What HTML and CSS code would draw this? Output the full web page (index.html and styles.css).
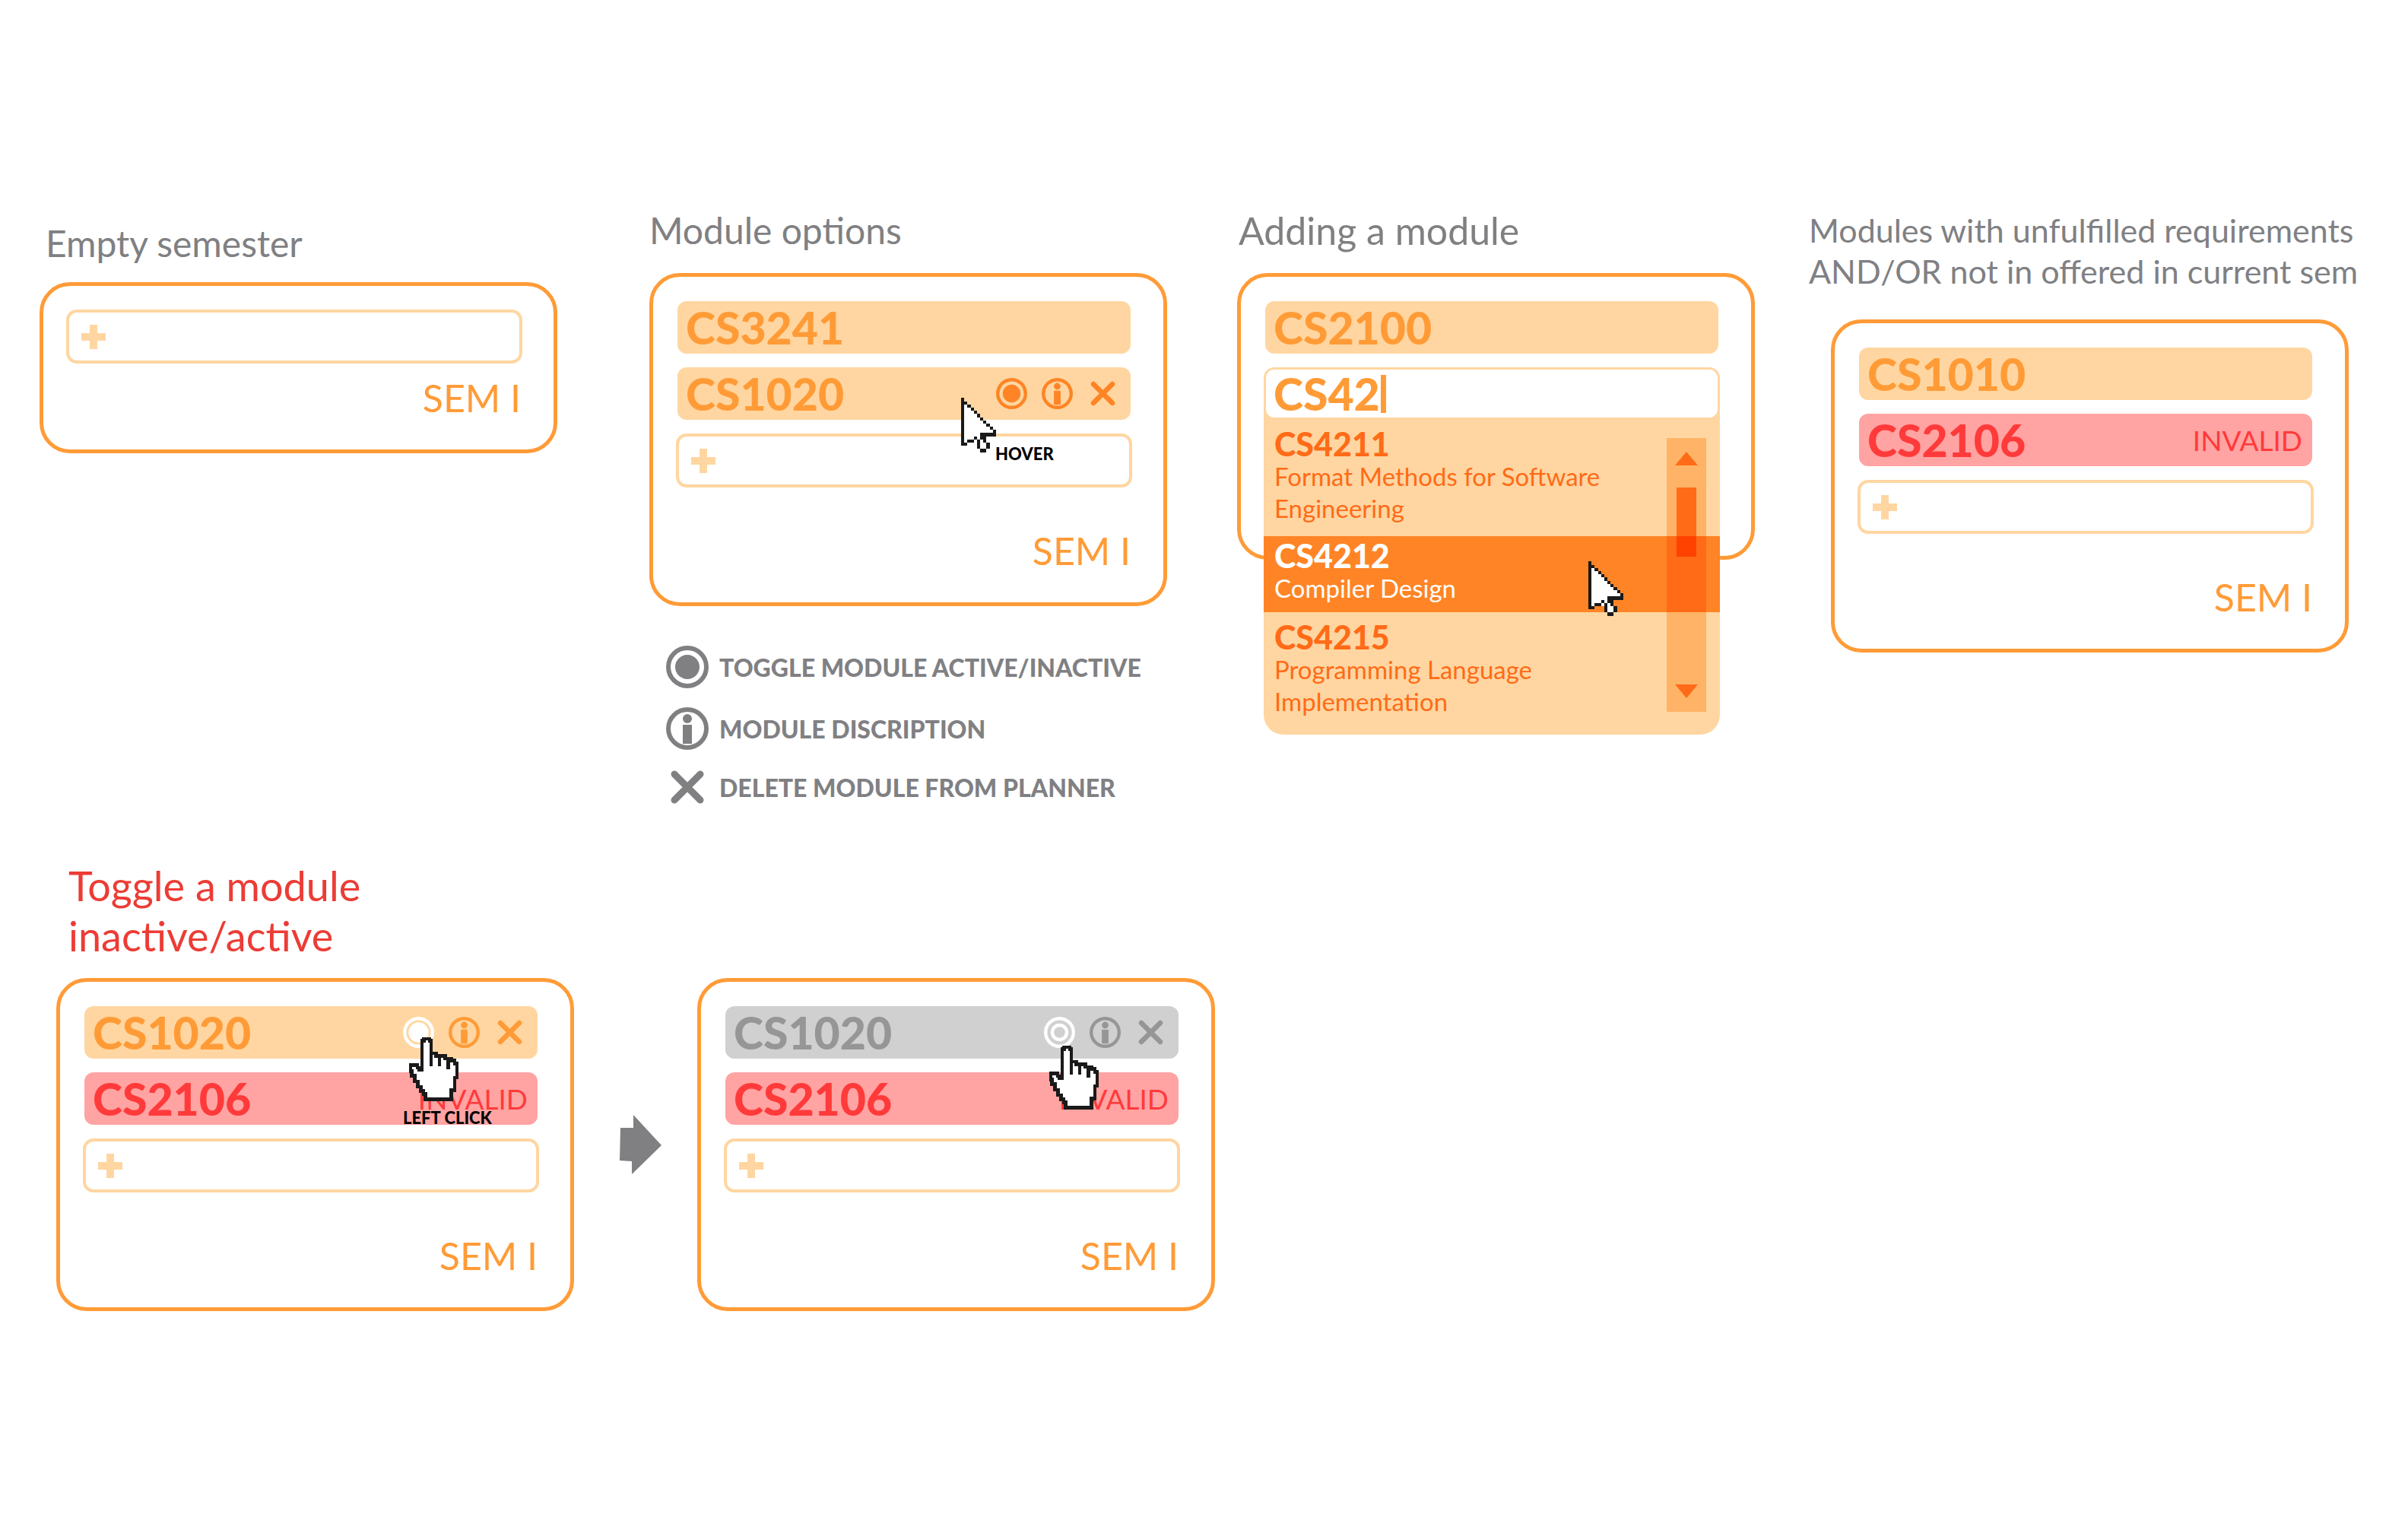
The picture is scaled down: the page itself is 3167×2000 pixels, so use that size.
FILE: index.html
```html
<!DOCTYPE html>
<html lang="en">
<head>
<meta charset="utf-8">
<meta name="viewport" content="width=device-width, initial-scale=1">
<title>Module planner states</title>
<link rel="stylesheet" href="styles.css">
</head>
<body>
<svg class="sprite" aria-hidden="true">
  <symbol id="i-toggle" viewBox="0 0 56 56"><circle cx="28" cy="28" r="25" fill="none" stroke="currentColor" stroke-width="6"/><circle cx="28" cy="28" r="16" fill="currentColor"/></symbol>
  <symbol id="i-pressed" viewBox="0 0 56 56"><circle cx="28" cy="28" r="25" fill="none" stroke="currentColor" stroke-width="6"/><circle cx="28" cy="28" r="18" fill="currentColor"/></symbol>
  <symbol id="i-off" viewBox="0 0 56 56"><circle cx="28" cy="28" r="25" fill="none" stroke="currentColor" stroke-width="6"/><circle cx="28" cy="28" r="13" fill="none" stroke="currentColor" stroke-width="6"/></symbol>
  <symbol id="i-info" viewBox="0 0 56 56"><circle cx="28" cy="28" r="25" fill="none" stroke="currentColor" stroke-width="6"/><circle cx="28" cy="15" r="6" fill="currentColor"/><path d="M22 23h12v25H22z" fill="currentColor"/></symbol>
  <symbol id="i-delete" viewBox="0 0 56 56"><path d="M11 11 45 45M45 11 11 45" stroke="currentColor" stroke-width="9" stroke-linecap="round"/></symbol>
  <symbol id="i-plus" viewBox="0 0 32 32"><path d="M11 0h10v11h11v10H21v11H11V21H0V11h11z" fill="currentColor"/></symbol>
  <symbol id="i-arrow" viewBox="0 0 11 17" shape-rendering="crispEdges">
    <path fill="#fff" d="M0 0h1v1h1v1h1v1h1v1h1v1h1v1h1v1h1v1h1v1h1v1h1v2H7v1h1v1h1v2H8v1H6v-1H5v-2H4v-1H3v1H2v1H0z"/>
    <path fill="#1a1a1a" d="M0 0h1v15H0zM1 1h1v1H1zM2 2h1v1H2zM3 3h1v1H3zM4 4h1v1H4zM5 5h1v1H5zM6 6h1v1H6zM7 7h1v1H7zM8 8h1v1H8zM9 9h1v1H9zM10 10h1v2H6v-1h4zM6 12h2v1H6zM4 12h1v1H4zM2 13h2v1H2zM1 14h1v1H1zM5 13h1v2H5zM7 13h1v1H7zM8 14h1v2H8zM5 15h1v1H5zM6 16h2v1H6z"/>
  </symbol>
  <symbol id="i-hand" viewBox="24 27 194 251" shape-rendering="crispEdges">
    <path fill="#fff" stroke="#1a1a1a" stroke-width="13" d="M75 155V40H82V33H104V40H110V90H130V100H166V110H190V118H203V130H212V185H203V235H190V271H88V250H80V238H70V222H58V200H46V178H34V160H30V136H56V146H62V155Z"/>
    <path fill="none" stroke="#1a1a1a" stroke-width="13" d="M110 90V140M143 100V140M178 110V152"/>
  </symbol>
</svg>

<main class="board">
  <div class="states">
    <section class="state state-empty">
      <h2 class="title">Empty semester</h2>
      <div class="card card-short">
        <button class="add" type="button" aria-label="Add module"><svg class="plus"><use href="#i-plus"/></svg></button>
        <p class="sem">SEM I</p>
      </div>
    </section>

    <section class="state">
      <h2 class="title">Module options</h2>
      <div class="card">
        <div class="row"><span class="code">CS3241</span></div>
        <div class="row hovered">
          <span class="code">CS1020</span>
          <span class="tools">
            <button class="tool" type="button" aria-label="Toggle module"><svg><use href="#i-toggle"/></svg></button>
            <button class="tool" type="button" aria-label="Module description"><svg><use href="#i-info"/></svg></button>
            <button class="tool" type="button" aria-label="Delete module"><svg><use href="#i-delete"/></svg></button>
          </span>
        </div>
        <button class="add" type="button" aria-label="Add module"><svg class="plus"><use href="#i-plus"/></svg></button>
        <p class="sem">SEM I</p>
        <svg class="pointer pointer-hover"><use href="#i-arrow"/></svg>
        <span class="hint hint-hover">HOVER</span>
      </div>
      <ul class="legend">
        <li><svg><use href="#i-toggle"/></svg>TOGGLE MODULE ACTIVE/INACTIVE</li>
        <li><svg><use href="#i-info"/></svg>MODULE DISCRIPTION</li>
        <li class="legend-delete"><svg><use href="#i-delete"/></svg>DELETE MODULE FROM PLANNER</li>
      </ul>
    </section>

    <section class="state">
      <h2 class="title title-wide">Adding a module</h2>
      <div class="card card-search">
        <div class="row"><span class="code">CS2100</span></div>
        <div class="search">
          <input class="query" type="text" value="CS42" aria-label="Module code">
          <span class="caret"></span>
          <div class="menu">
            <ul class="results">
              <li class="result"><strong>CS4211</strong><span>Format Methods for Software Engineering</span></li>
              <li class="result selected"><strong>CS4212</strong><span>Compiler Design</span></li>
              <li class="result"><strong>CS4215</strong><span>Programming Language Implementation</span></li>
            </ul>
            <div class="scrollbar">
              <svg class="step" viewBox="0 0 30 18"><path d="M15 0 30 18H0z" fill="currentColor"/></svg>
              <div class="thumb"></div>
              <svg class="step step-down" viewBox="0 0 30 18"><path d="M0 0H30L15 18z" fill="currentColor"/></svg>
            </div>
            <svg class="pointer pointer-menu"><use href="#i-arrow"/></svg>
          </div>
        </div>
      </div>
    </section>

    <section class="state state-invalid">
      <h2 class="title title-small">Modules with unfulfilled requirements<br>AND/OR not in offered in current sem</h2>
      <div class="card">
        <div class="row"><span class="code">CS1010</span></div>
        <div class="row invalid"><span class="code">CS2106</span><span class="flag">INVALID</span></div>
        <button class="add" type="button" aria-label="Add module"><svg class="plus"><use href="#i-plus"/></svg></button>
        <p class="sem">SEM I</p>
      </div>
    </section>
  </div>

  <section class="toggle">
    <h2 class="title title-toggle">Toggle a module<br>inactive/active</h2>
    <div class="steps">
      <div class="card">
        <div class="row">
          <span class="code">CS1020</span>
          <span class="tools">
            <button class="tool lit" type="button" aria-label="Toggle module" aria-pressed="true"><svg><use href="#i-pressed"/></svg></button>
            <button class="tool" type="button" aria-label="Module description"><svg><use href="#i-info"/></svg></button>
            <button class="tool" type="button" aria-label="Delete module"><svg><use href="#i-delete"/></svg></button>
          </span>
        </div>
        <div class="row invalid"><span class="code">CS2106</span><span class="flag">INVALID</span></div>
        <button class="add" type="button" aria-label="Add module"><svg class="plus"><use href="#i-plus"/></svg></button>
        <p class="sem">SEM I</p>
        <svg class="hand hand-click"><use href="#i-hand"/></svg>
        <span class="hint hint-click">LEFT CLICK</span>
      </div>
      <svg class="next" viewBox="0 0 55 78"><path d="M1 17H18V0L55 40 16 78V61L0 60z" fill="currentColor"/></svg>
      <div class="card">
        <div class="row inactive">
          <span class="code">CS1020</span>
          <span class="tools">
            <button class="tool lit" type="button" aria-label="Toggle module" aria-pressed="false"><svg><use href="#i-off"/></svg></button>
            <button class="tool" type="button" aria-label="Module description"><svg><use href="#i-info"/></svg></button>
            <button class="tool" type="button" aria-label="Delete module"><svg><use href="#i-delete"/></svg></button>
          </span>
        </div>
        <div class="row invalid"><span class="code">CS2106</span><span class="flag">INVALID</span></div>
        <button class="add" type="button" aria-label="Add module"><svg class="plus"><use href="#i-plus"/></svg></button>
        <p class="sem">SEM I</p>
        <svg class="hand hand-done"><use href="#i-hand"/></svg>
      </div>
    </div>
  </section>
</main>
</body>
</html>
```
FILE: styles.css
```css
:root {
  --orange: #ff9b37;
  --peach: #ffd6a1;
  --deep: #ff6b17;
  --vivid: #ff8425;
  --grey: #808083;
}

* { box-sizing: border-box; }

body {
  margin: 0;
  background: #fff;
  color: var(--grey);
  font-family: Lato, "Open Sans", sans-serif;
}

h2, p, ul { margin: 0; padding: 0; }
ul { list-style: none; }
button { padding: 0; border: 0; background: none; color: inherit; font: inherit; }
svg { display: block; }
.sprite { position: absolute; width: 0; height: 0; }

.board { padding: 276px 0 276px 52px; }

.states {
  display: grid;
  grid-template-columns: 802fr 773fr 752fr 788fr;
  align-items: start;
}

.title {
  margin-bottom: 29px;
  font-size: 48px;
  font-weight: 400;
  line-height: 54px;
}
.title-wide { font-size: 50px; padding-left: 2px; }
.state-empty { padding-top: 17px; }
.state-empty .title { margin-bottom: 24px; padding-left: 8px; }
.title-small { margin-bottom: 36px; font-size: 43px; white-space: nowrap; }
.state-invalid .card { margin-left: 29px; }

.card {
  position: relative;
  display: flex;
  flex-direction: column;
  gap: 18px;
  width: 681px;
  max-width: 100%;
  min-height: 438px;
  padding: 32px 43px 38px 32px;
  border: 5px solid var(--orange);
  border-radius: 40px;
}
.card-short { gap: 14px; min-height: 225px; padding-top: 31px; }
.card-search { min-height: 377px; }

.row {
  display: flex;
  align-items: center;
  justify-content: space-between;
  height: 69px;
  padding: 0 16px 0 11px;
  border-radius: 12px;
  background: var(--peach);
  color: var(--orange);
}
.hovered .tools { color: var(--vivid); }
.invalid { padding-right: 13px; background: #ffa3a3; color: #ff3a3a; }
.inactive { background: #d0d0d0; color: #969696; }

.code { font-size: 59px; font-weight: 900; line-height: 68px; }
.flag { font-size: 37px; font-weight: 400; }

.tools { display: flex; gap: 19px; }
.tool, .tool svg { width: 41px; height: 41px; }
.lit { color: #fff; }

.add {
  display: flex;
  align-items: center;
  height: 71px;
  margin: 0 -2px;
  padding-left: 16px;
  border: 4px solid var(--peach);
  border-radius: 14px;
  color: var(--peach);
}
.plus { width: 32px; height: 32px; }

.sem {
  margin-top: auto;
  color: var(--orange);
  font-size: 50px;
  font-weight: 400;
  line-height: 60px;
  text-align: right;
}

.legend {
  display: grid;
  gap: 25px;
  margin-top: 52px;
  padding-left: 22px;
  font-size: 32px;
  font-weight: 900;
}
.legend li { display: flex; align-items: center; gap: 14px; height: 56px; }
.legend svg { width: 56px; height: 56px; }
.legend .legend-delete { height: 48px; }

.search {
  position: relative;
  margin: 0 -2px;
}
.query {
  position: relative;
  z-index: 1;
  display: block;
  width: 100%;
  height: 69px;
  padding: 0 10px;
  border: 3px solid var(--peach);
  border-radius: 14px;
  background: #fff;
  color: var(--orange);
  font: 900 59px/60px Lato, sans-serif;
  outline: 0;
}
.caret {
  position: absolute;
  z-index: 2;
  top: 10px;
  left: 154px;
  width: 7px;
  height: 50px;
  background: var(--orange);
}
.menu {
  position: absolute;
  top: 40px;
  right: 0;
  left: 0;
  padding-top: 28px;
  border-radius: 0 0 26px 26px;
  background: var(--peach);
  color: var(--deep);
}
.result {
  display: flex;
  flex-direction: column;
  padding: 12px 150px 16px 14px;
  font-size: 33px;
  line-height: 42px;
}
.result strong { font-size: 43px; font-weight: 900; }
.result:last-child { padding-bottom: 23px; }
.selected { padding-top: 5px; padding-bottom: 11px; background: var(--vivid); color: #fff; }

.scrollbar {
  position: absolute;
  top: 53px;
  right: 18px;
  bottom: 30px;
  display: flex;
  flex-direction: column;
  align-items: center;
  width: 52px;
  padding: 18px 0;
  background: linear-gradient(#ffb366 129px, var(--deep) 129px 229px, #ffb366 229px);
}
.step { width: 30px; height: 18px; }
.step-down { margin-top: auto; }
.thumb {
  width: 26px;
  height: 91px;
  margin-top: 29px;
  background: linear-gradient(var(--deep) 64px, #ff4200 64px);
}

.pointer { position: absolute; width: 46px; height: 72px; }
.pointer-hover { top: 159px; left: 405px; }
.pointer-menu { top: 215px; left: 427px; }
.hint {
  position: absolute;
  color: #000;
  font-size: 22px;
  font-weight: 900;
  line-height: 28px;
}
.hint-hover { top: 219px; left: 450px; }
.hint-click { top: 165px; left: 451px; }
.hand { position: absolute; width: 65px; height: 84px; }
.hand-click { top: 73px; left: 459px; }
.hand-done { top: 84px; left: 458px; }

.toggle { margin-top: 73px; padding-left: 22px; }
.title-toggle { margin-bottom: 22px; padding-left: 16px; color: #ec3c35; font-size: 54px; line-height: 66px; }
.steps { display: flex; align-items: center; }
.next { width: 55px; height: 78px; margin: 0 47px 0 60px; }
```
